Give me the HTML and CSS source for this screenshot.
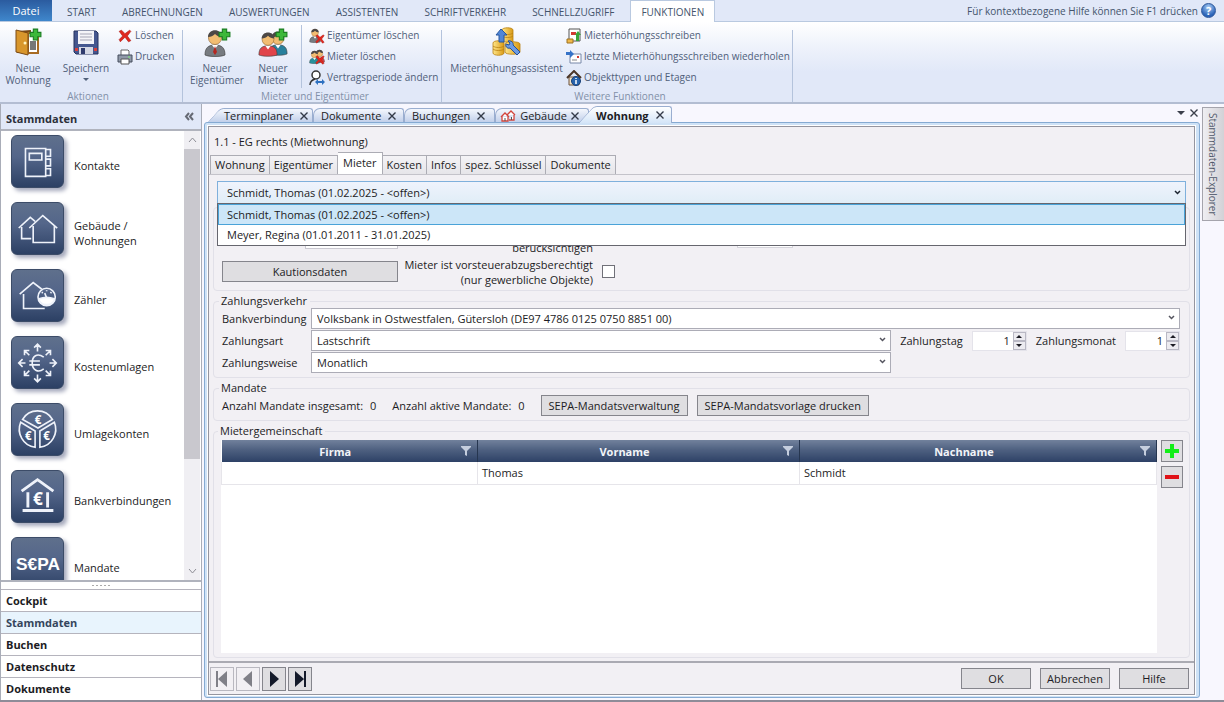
FILE: index.html
```html
<!DOCTYPE html>
<html lang="de">
<head>
    <meta charset="UTF-8">
    <meta name="viewport" content="width=device-width, initial-scale=1.0">
    <title>Hausverwaltung - Wohnung</title>
    <link rel="stylesheet" href="styles.css">
</head>
<body>

<svg class="defs" aria-hidden="true">
    <defs>
        <linearGradient id="gold" x1="0" x2="1"><stop offset="0" stop-color="#ffe68a"/><stop offset="1" stop-color="#d99a14"/></linearGradient>
        <symbol id="plus" viewBox="0 0 12 12"><path d="M4 1h4v3h3v4H8v3H4V8H1V4h3z" fill="#3db83a" stroke="#1b7d22"/></symbol>
        <symbol id="cross" viewBox="0 0 12 12"><path d="M1 2l2-1 3 3 4-3 1 1-3 4 3 4-2 1-3-4-4 4-1-2 3-3z" fill="#e0281e" stroke="#a81510" stroke-width=".5"/></symbol>
        <symbol id="person" viewBox="0 0 22 28">
            <path d="M1 26c0-7 3-10 10-10s10 3 10 10c-4 2-16 2-20 0z" fill="currentColor" stroke="#444" stroke-width=".7"/>
            <path d="M8 16l3 4 3-4z" fill="#fff"/>
            <circle cx="11" cy="9" r="6.500" fill="#f2bd72" stroke="#8a5a24" stroke-width=".6"/>
            <path d="M4 8c0-9 14-9 14 0-3 0-5-1-7-3-2 2-4 3-7 3z" fill="#4c4846"/>
        </symbol>
        <symbol id="filter" viewBox="0 0 10 10"><path d="M0 0h10v1L6 5v5L4 9V5L0 1z" fill="#c5cede"/></symbol>
        <symbol id="chevron" viewBox="0 0 7 5"><path d="M1 1l2.500 2.500L6 1" fill="none" stroke="currentColor" stroke-width="1.500"/></symbol>
        <symbol id="close" viewBox="0 0 8 8"><path d="M.5.5l7 7M7.500.5l-7 7" stroke="currentColor" stroke-width="1.400"/></symbol>
    </defs>
</svg>

<div class="app">
    <nav class="ribbon-tabs">
        <button class="ribbon-file">Datei</button>
        <button class="ribbon-tab">START</button>
        <button class="ribbon-tab">ABRECHNUNGEN</button>
        <button class="ribbon-tab">AUSWERTUNGEN</button>
        <button class="ribbon-tab">ASSISTENTEN</button>
        <button class="ribbon-tab">SCHRIFTVERKEHR</button>
        <button class="ribbon-tab">SCHNELLZUGRIFF</button>
        <button class="ribbon-tab active">FUNKTIONEN</button>
        <span class="help-hint">Für kontextbezogene Hilfe können Sie F1 drücken</span>
        <button class="help-button" aria-label="Hilfe">?</button>
    </nav>

    <div class="ribbon">
        <section class="ribbon-group group-actions">
            <div class="ribbon-items">
                <button class="big-button">
                    <svg width="28" height="28" viewBox="0 0 28 28">
                        <path d="M3 3l14-1v23H3z" fill="#7b4a16"/>
                        <path d="M14 5h10v20H14z" fill="#fff" stroke="#a86b22" stroke-width="2"/>
                        <path d="M16 13h6v9h-6z" fill="#777"/>
                        <path d="M2 2l12 3v22L2 24z" fill="#d8962c" stroke="#7b4a16"/>
                        <circle cx="11" cy="15" r="1.500" fill="#fff3c0"/>
                        <use href="#plus" x="15" y="0" width="13" height="13"/>
                    </svg>
                    <span>Neue<br>Wohnung</span>
                </button>
                <button class="big-button save">
                    <svg width="28" height="28" viewBox="0 0 28 28">
                        <path d="M2 3h22l2 2v21H4l-2-2z" fill="#45578f" stroke="#26325f"/>
                        <path d="M6 3h16v13H6z" fill="#f4f4f8"/>
                        <path d="M8 6h12M8 9h12M8 12h12" stroke="#a5a5b5"/>
                        <path d="M7 19h14v7H7z" fill="#d5d8e4"/>
                        <path d="M9 20h4v6H9z" fill="#303b6d"/>
                        <path d="M3 20h3v3H3zM22 20h3v3h-3z" fill="#d8403c"/>
                    </svg>
                    <span>Speichern</span>
                    <i class="drop-arrow"></i>
                </button>
                <div class="small-buttons">
                    <button class="small-button"><svg width="16" height="14"><use href="#cross"/></svg>Löschen</button>
                    <button class="small-button">
                        <svg width="16" height="16" viewBox="0 0 16 16"><path d="M4 1h7l1 1v5H4z" fill="#fff" stroke="#666"/><path d="M1 6h14v7H1z" fill="#9099a8" stroke="#444c5c"/><path d="M4 10h8v5H4z" fill="#fff" stroke="#555"/><path d="M11 8h2" stroke="#7bf06a"/></svg>Drucken
                    </button>
                </div>
            </div>
            <h2>Aktionen</h2>
        </section>

        <section class="ribbon-group group-tenants">
            <div class="ribbon-items">
                <button class="big-button">
                    <svg width="28" height="28" viewBox="0 0 28 28" color="#777b80">
                        <use href="#person" x="1" y="1" width="22" height="28"/>
                        <path d="M12 18l2 6-2 3-2-3z" fill="#b52620"/>
                        <use href="#plus" x="15" y="0" width="13" height="13"/>
                    </svg>
                    <span>Neuer<br>Eigentümer</span>
                </button>
                <button class="big-button">
                    <svg width="30" height="28" viewBox="0 0 30 28">
                        <use href="#person" x="10" y="2" width="20" height="26" color="#28809c"/>
                        <use href="#person" x="0" y="3" width="20" height="26" color="#e0444a"/>
                        <use href="#plus" x="17" y="0" width="13" height="13"/>
                    </svg>
                    <span>Neuer<br>Mieter</span>
                </button>
                <div class="small-buttons divided">
                    <button class="small-button">
                        <svg width="16" height="16" viewBox="0 0 16 16"><use href="#person" width="12" height="15" color="#777b80"/><use href="#cross" x="6" y="6" width="10" height="10"/></svg>Eigentümer löschen
                    </button>
                    <button class="small-button">
                        <svg width="16" height="16" viewBox="0 0 16 16"><use href="#person" x="5" width="11" height="14" color="#d0444a"/><use href="#person" y="1" width="11" height="14" color="#28909c"/><use href="#cross" x="6" y="6" width="10" height="10"/></svg>Mieter löschen
                    </button>
                    <button class="small-button">
                        <svg width="16" height="16" viewBox="0 0 16 16"><circle cx="7" cy="5" r="4" fill="#fff" stroke="#333" stroke-width="1.500"/><path d="M1 15c0-4 2-5 5-6" fill="none" stroke="#333" stroke-width="1.500"/><path d="M6 12l3-3v2h4V9l3 3-3 3v-2H9v2z" fill="#2d70c0"/></svg>Vertragsperiode ändern
                    </button>
                </div>
            </div>
            <h2>Mieter und Eigentümer</h2>
        </section>

        <section class="ribbon-group group-more">
            <div class="ribbon-items">
                <button class="big-button wide">
                    <svg width="30" height="30" viewBox="0 0 30 30">
                        <g fill="url(#gold)" stroke="#b98213" stroke-width=".8">
                            <path d="M10 3c0-3 11-3 11 0v12H10z"/><path d="M1 16c0-3 11-3 11 0v10c0 3-11 3-11 0z"/><path d="M13 17c0-3 15-3 15 0v8c0 3-15 3-15 0z"/>
                            <path d="M10 6c2 2 9 2 11 0M10 9c2 2 9 2 11 0M1 19c2 2 9 2 11 0M1 22c2 2 9 2 11 0" fill="none"/>
                        </g>
                        <path d="M9 2l6 6h-3v7H7V8H4z" fill="#4f86d6" stroke="#2857a0"/>
                        <path d="M16 14c3-1 6 2 5 4l7 7-3 3-7-7c-3 1-5-2-4-4l3 1 1-2z" fill="#6b9be3" stroke="#264f96"/>
                    </svg>
                    <span>Mieterhöhungsassistent</span>
                </button>
                <div class="small-buttons">
                    <button class="small-button">
                        <svg width="16" height="16" viewBox="0 0 16 16"><path d="M3 1h11v12H3z" fill="#fff" stroke="#555"/><path d="M5 4h5v3H5z" fill="#d23a32"/><path d="M1 11h6v4H1z" fill="#f0b94a" stroke="#9c7020"/><path d="M12 3l3 4h-2v6h-3V7H9z" fill="#38a53a"/></svg>Mieterhöhungsschreiben
                    </button>
                    <button class="small-button">
                        <svg width="16" height="16" viewBox="0 0 16 16"><path d="M4 5h11v9H4z" fill="#fff" stroke="#7787a8"/><path d="M11 7h2v2h-2z" fill="#d23a32"/><path d="M6 11h5" stroke="#888"/><path d="M0 3h4V1l4 4-4 4V6H0z" fill="#3673c8"/></svg>letzte Mieterhöhungsschreiben wiederholen
                    </button>
                    <button class="small-button">
                        <svg width="16" height="16" viewBox="0 0 16 16"><path d="M3 7h10v8H3z" fill="#f4e3c6" stroke="#6b513a"/><path d="M1 8l7-7 7 7" fill="none" stroke="#4a3528" stroke-width="2"/><circle cx="10" cy="11" r="4.500" fill="#2763ad" stroke="#173f78"/><path d="M10 8v1M10 10v4" stroke="#fff" stroke-width="1.500"/></svg>Objekttypen und Etagen
                    </button>
                </div>
            </div>
            <h2>Weitere Funktionen</h2>
        </section>
    </div>

    <div class="workspace">
        <aside class="sidebar">
            <header class="sidebar-header">
                <h2>Stammdaten</h2>
                <button aria-label="Einklappen"><svg width="11" height="9" viewBox="0 0 11 9"><path d="M5 1L2 4.500 5 8M9 1L6 4.500 9 8" fill="none" stroke="currentColor" stroke-width="2"/></svg></button>
            </header>
            <div class="sidebar-body">
                <ul class="module-list">
                    <li><a href="#">
                        <svg class="tile" viewBox="0 0 53 53"><path d="M14 13h21v29H14zM18 18h13v7H18zM35 14h5v7h-5M35 24h5v7h-5M35 34h5v7h-5"/></svg>
                        <span>Kontakte</span></a></li>
                    <li><a href="#">
                        <svg class="tile" viewBox="0 0 53 53"><path d="M7 26l12-11 5 4M10 25v12h10M18 26l14-13 15 13M22 24v17h22V24"/></svg>
                        <span>Gebäude /<br>Wohnungen</span></a></li>
                    <li><a href="#">
                        <svg class="tile" viewBox="0 0 53 53"><path d="M8 25l14-12 9 7M12 25v15h22"/><circle cx="36" cy="28" r="9"/><path d="M28 30c5-2 11-2 16 0-1 8-15 8-16 0z" fill="#fff"/><path d="M36 29l-2-5M31 23l1 1M36 21v1M41 23l-1 1"/></svg>
                        <span>Zähler</span></a></li>
                    <li><a href="#">
                        <svg class="tile" viewBox="0 0 53 53"><path d="M33 21c-7-5-12-1-12 6s6 11 12 6M18 25h11M18 29h11"/><path d="M26.500 15V8M23 11l3.500-3.500L30 11M26.500 39v7M23 43l3.500 3.500L30 43M14 27H7M11 23l-4 4 4 4M39 27h7M42 23l4 4-4 4M18 19l-5-5M13 19v-5h5M35 19l5-5M35 14h5v5M18 35l-5 5M13 35v5h5M35 35l5 5M35 40h5v-5"/></svg>
                        <span>Kostenumlagen</span></a></li>
                    <li><a href="#">
                        <svg class="tile" viewBox="0 0 53 53"><path d="M11 16a18 18 0 0 1 31 0l-15 9zM9 19a19 19 0 0 0 15 26V28zM44 19a19 19 0 0 1-15 26V28z"/><text x="27" y="21" class="tile-euro">€</text><text x="17" y="37" class="tile-euro">€</text><text x="36" y="37" class="tile-euro">€</text></svg>
                        <span>Umlagekonten</span></a></li>
                    <li><a href="#">
                        <svg class="tile bold" viewBox="0 0 53 53"><path d="M10 21L26.500 9 43 21M16.500 22v16M37 22v16M11 41h32"/><text x="27" y="35" class="tile-euro large">€</text></svg>
                        <span>Bankverbindungen</span></a></li>
                    <li><a href="#">
                        <svg class="tile" viewBox="0 0 53 53"><text x="27" y="33" class="tile-sepa">S€PA</text></svg>
                        <span>Mandate</span></a></li>
                </ul>
                <div class="scrollbar">
                    <svg width="9" height="6" viewBox="0 0 9 6"><path d="M1 5l3.500-4L8 5"/></svg>
                    <div class="scroll-track"><div class="scroll-thumb"></div></div>
                    <svg width="9" height="6" viewBox="0 0 9 6"><path d="M1 1l3.500 4L8 1"/></svg>
                </div>
            </div>
            <div class="splitter"><i></i><i></i><i></i><i></i><i></i></div>
            <nav class="sidebar-nav">
                <a href="#">Cockpit</a>
                <a href="#" class="active">Stammdaten</a>
                <a href="#">Buchen</a>
                <a href="#">Datenschutz</a>
                <a href="#">Dokumente</a>
            </nav>
        </aside>

        <main class="documents">
            <div class="doc-tabs">
                <div class="doc-tab slanted"><button>Terminplaner</button><button class="close" aria-label="Schließen"><svg width="8" height="8"><use href="#close"/></svg></button></div>
                <div class="doc-tab"><button>Dokumente</button><button class="close" aria-label="Schließen"><svg width="8" height="8"><use href="#close"/></svg></button></div>
                <div class="doc-tab"><button>Buchungen</button><button class="close" aria-label="Schließen"><svg width="8" height="8"><use href="#close"/></svg></button></div>
                <div class="doc-tab with-icon">
                    <svg width="16" height="12" viewBox="0 0 16 12"><path d="M1 7l4-4 4 4M2 6v5h6V6M7 5l4-4 4 4M9 10h5V5" fill="#fff" stroke="#d2453c" stroke-width="1.300"/><path d="M5 11V8M11.500 10V7" stroke="#555"/></svg>
                    <button>Gebäude</button><button class="close" aria-label="Schließen"><svg width="8" height="8"><use href="#close"/></svg></button>
                </div>
                <div class="doc-tab slanted active"><button>Wohnung</button><button class="close" aria-label="Schließen"><svg width="8" height="8"><use href="#close"/></svg></button></div>
                <div class="doc-tools">
                    <button aria-label="Fensterliste"><i class="drop-arrow"></i></button>
                    <button aria-label="Schließen"><svg width="8" height="8"><use href="#close"/></svg></button>
                </div>
            </div>

            <div class="doc-frame">
                <form class="editor">
                    <h1>1.1 - EG rechts (Mietwohnung)</h1>
                    <div class="page-tabs">
                        <button type="button">Wohnung</button>
                        <button type="button">Eigentümer</button>
                        <button type="button" class="active">Mieter</button>
                        <button type="button">Kosten</button>
                        <button type="button">Infos</button>
                        <button type="button">spez. Schlüssel</button>
                        <button type="button">Dokumente</button>
                    </div>

                    <div class="page">
                        <div class="tenant-combo">
                            <select aria-label="Mieter">
                                <option>Schmidt, Thomas (01.02.2025 - &lt;offen&gt;)</option>
                                <option>Meyer, Regina (01.01.2011 - 31.01.2025)</option>
                            </select>
                            <svg class="chevron" width="7" height="5"><use href="#chevron"/></svg>
                            <ul class="combo-list" role="listbox">
                                <li role="option" aria-selected="true">Schmidt, Thomas (01.02.2025 - &lt;offen&gt;)</li>
                                <li role="option">Meyer, Regina (01.01.2011 - 31.01.2025)</li>
                            </ul>
                        </div>

                        <fieldset class="contract">
                            <input type="text" class="deposit" aria-label="Kaution">
                            <label class="right-label" for="consider">berücksichtigen</label>
                            <input type="text" id="consider" class="persons">
                            <button type="button" class="button">Kautionsdaten</button>
                            <label class="right-label" for="vat">Mieter ist vorsteuerabzugsberechtigt<br>(nur gewerbliche Objekte)</label>
                            <input type="checkbox" id="vat">
                        </fieldset>

                        <fieldset>
                            <legend>Zahlungsverkehr</legend>
                            <div class="payment">
                                <label for="bank">Bankverbindung</label>
                                <div class="select full">
                                    <select id="bank"><option>Volksbank in Ostwestfalen, Gütersloh (DE97 4786 0125 0750 8851 00)</option></select>
                                    <svg class="chevron" width="7" height="5"><use href="#chevron"/></svg>
                                </div>
                                <label for="kind">Zahlungsart</label>
                                <div class="select">
                                    <select id="kind"><option>Lastschrift</option></select>
                                    <svg class="chevron" width="7" height="5"><use href="#chevron"/></svg>
                                </div>
                                <label for="day">Zahlungstag</label>
                                <div class="spinner">
                                    <input type="text" id="day" value="1">
                                    <button type="button" aria-label="Mehr"><i class="drop-arrow up"></i></button>
                                    <button type="button" aria-label="Weniger"><i class="drop-arrow"></i></button>
                                </div>
                                <label for="month">Zahlungsmonat</label>
                                <div class="spinner">
                                    <input type="text" id="month" value="1">
                                    <button type="button" aria-label="Mehr"><i class="drop-arrow up"></i></button>
                                    <button type="button" aria-label="Weniger"><i class="drop-arrow"></i></button>
                                </div>
                                <label for="interval">Zahlungsweise</label>
                                <div class="select">
                                    <select id="interval"><option>Monatlich</option></select>
                                    <svg class="chevron" width="7" height="5"><use href="#chevron"/></svg>
                                </div>
                            </div>
                        </fieldset>

                        <fieldset>
                            <legend>Mandate</legend>
                            <div class="mandates">
                                <span class="count">Anzahl Mandate insgesamt: <b>0</b></span>
                                <span class="count">Anzahl aktive Mandate: <b>0</b></span>
                                <button type="button" class="button">SEPA-Mandatsverwaltung</button>
                                <button type="button" class="button">SEPA-Mandatsvorlage drucken</button>
                            </div>
                        </fieldset>

                        <fieldset class="community">
                            <legend>Mietergemeinschaft</legend>
                            <div class="community-body">
                                <div class="grid-area">
                                    <table>
                                        <colgroup><col class="col-company"><col class="col-first"><col></colgroup>
                                        <thead>
                                            <tr>
                                                <th>Firma<svg width="10" height="10"><use href="#filter"/></svg></th>
                                                <th>Vorname<svg width="10" height="10"><use href="#filter"/></svg></th>
                                                <th>Nachname<svg width="10" height="10"><use href="#filter"/></svg></th>
                                            </tr>
                                        </thead>
                                        <tbody>
                                            <tr><td></td><td>Thomas</td><td>Schmidt</td></tr>
                                        </tbody>
                                    </table>
                                </div>
                                <div class="row-buttons">
                                    <button type="button" class="button" aria-label="Hinzufügen"><svg width="14" height="14" viewBox="0 0 14 14"><path d="M7 0v14M0 7h14" stroke="#12ee18" stroke-width="4"/></svg></button>
                                    <button type="button" class="button" aria-label="Entfernen"><svg width="14" height="14" viewBox="0 0 14 14"><path d="M0 7h14" stroke="#e01218" stroke-width="4"/></svg></button>
                                </div>
                            </div>
                        </fieldset>
                    </div>

                    <footer class="editor-footer">
                        <button type="button" class="record" disabled aria-label="Erster"><svg width="12" height="16" viewBox="0 0 12 16"><path d="M0 0h2v16H0zM11 0v16L2 8z"/></svg></button>
                        <button type="button" class="record" disabled aria-label="Voriger"><svg width="12" height="16" viewBox="0 0 12 16"><path d="M10 0v16L1 8z"/></svg></button>
                        <button type="button" class="record" aria-label="Nächster"><svg width="12" height="16" viewBox="0 0 12 16"><path d="M2 0v16l9-8z"/></svg></button>
                        <button type="button" class="record" aria-label="Letzter"><svg width="12" height="16" viewBox="0 0 12 16"><path d="M10 0h2v16h-2zM1 0v16l9-8z"/></svg></button>
                        <div class="dialog-buttons">
                            <button type="button" class="button">OK</button>
                            <button type="button" class="button">Abbrechen</button>
                            <button type="button" class="button">Hilfe</button>
                        </div>
                    </footer>
                </form>
            </div>
        </main>

        <aside class="dock-right">
            <button>Stammdaten-Explorer</button>
        </aside>
    </div>
</div>

</body>
</html>
```
FILE: styles.css
```css
* {
    box-sizing: border-box;
}
body {
    margin: 0;
    font-family: 'Segoe UI', 'Open Sans', 'Noto Sans', sans-serif;
    font-size: 11px;
    line-height: 15px;
    color: #1c1c24;
    background: #f8f7fe;
}
button, input, select {
    font: inherit;
    color: inherit;
    margin: 0;
}
button {
    padding: 0;
    border: 0;
    background: none;
    white-space: nowrap;
}
h1, h2, ul {
    margin: 0;
    padding: 0;
    font-size: inherit;
    font-weight: normal;
    list-style: none;
}
a {
    color: inherit;
    text-decoration: none;
}
svg {
    display: block;
    flex: none;
}
.defs {
    position: absolute;
    width: 0;
    height: 0;
}
.app {
    display: flex;
    flex-direction: column;
    height: 100vh;
    border-bottom: 2px solid #8e8c98;
}
.drop-arrow {
    width: 0;
    border: 3px solid transparent;
    border-top-color: currentColor;
    border-bottom: 0;
}
.drop-arrow.up {
    border-top: 0;
    border-bottom: 3px solid currentColor;
}

/* ribbon */
.ribbon-tabs {
    display: flex;
    align-items: flex-end;
    height: 22px;
    flex: none;
    background: #e1e8f8;
    border-bottom: 1px solid #b9c9e0;
    color: #44546c;
}
.ribbon-file {
    width: 52px;
    height: 21px;
    margin-right: 2px;
    color: #fff;
    background: linear-gradient(#2b5b9f, #3f87cc);
}
.ribbon-tab {
    height: 20px;
    padding: 2px 13px 0;
    font-size: 10px;
}
.ribbon-tab.active {
    height: 22px;
    margin: 0 3px -1px;
    padding: 1px 10px 0;
    background: #fff;
    border: 1px solid #b9c9e0;
    border-bottom: 0;
}
.help-hint, .ribbon, .dock-right {
    font-size: 10px;
}
.help-hint {
    margin-left: auto;
    padding-bottom: 2px;
}
.help-button {
    width: 15px;
    height: 15px;
    margin: 0 8px 3px 3px;
    border-radius: 50%;
    border: 1px solid #2c569a;
    background: radial-gradient(circle at 50% 25%, #a7ccf5, #2b63b8 70%);
    color: #fff;
    font-weight: bold;
    line-height: 12px;
}
.ribbon {
    display: flex;
    flex: none;
    height: 82px;
    padding-top: 4px;
    background: linear-gradient(#fff, #eef2fb 25px, #e1e8f8 50px, #e1e8f8);
    border-bottom: 2px solid #b3bdd2;
    color: #50607a;
}
.ribbon-group {
    display: flex;
    flex-direction: column;
    justify-content: space-between;
    margin-top: 4px;
    border-right: 1px solid #b4c3dc;
}
.group-actions {
    width: 183px;
    padding-right: 6px;
}
.group-tenants {
    width: 259px;
    padding-left: 6px;
}
.group-more {
    width: 351px;
    padding-left: 6px;
}
.ribbon-group h2 {
    text-align: center;
    line-height: 12px;
    color: #8290a8;
}
.ribbon-items {
    display: flex;
    height: 58px;
}
.big-button {
    display: flex;
    flex-direction: column;
    align-items: center;
    width: 56px;
    height: 56px;
    line-height: 12px;
    white-space: normal;
}
.big-button svg {
    height: 30px;
    margin: -3px 0 5px;
}
.big-button.wide {
    width: 117px;
}
.big-button.save {
    width: 60px;
}
.big-button .drop-arrow {
    margin-top: 4px;
}
.small-buttons {
    display: flex;
    flex-direction: column;
    margin-left: 1px;
    margin-top: -5px;
}
.small-button {
    display: flex;
    align-items: center;
    gap: 2px;
    height: 21px;
}
.small-buttons.divided {
    margin-left: 0;
    padding-left: 7px;
    border-left: 1px solid #b4c3dc;
}

/* workspace */
.workspace {
    display: flex;
    flex: 1;
    min-height: 0;
}
.sidebar {
    display: flex;
    flex-direction: column;
    width: 202px;
    flex: none;
    padding-bottom: 1px;
    border: 1px solid #a9adb8;
    border-width: 0 1px;
    background: #fff;
}
.sidebar-header {
    display: flex;
    justify-content: space-between;
    align-items: center;
    height: 27px;
    flex: none;
    padding: 4px 6px 0 5px;
    background: #e1e8f8;
    border-bottom: 2px solid #b0b3bd;
    color: #2c303a;
}
.sidebar-header h2 {
    font-weight: bold;
}
.sidebar-header button {
    color: #666a74;
    padding-bottom: 4px;
}
.sidebar-body {
    display: flex;
    flex: 1;
    min-height: 0;
    border-bottom: 2px solid #b0b3bd;
}
.module-list {
    flex: 1;
    overflow: hidden;
    padding: 4px 0 0 10px;
}
.module-list a {
    display: flex;
    align-items: flex-start;
    gap: 10px;
    height: 67px;
}
.module-list span {
    display: flex;
    align-items: center;
    height: 61px;
}
.tile {
    width: 53px;
    height: 53px;
    border-radius: 6px;
    background: linear-gradient(#5f708c, #54668a 40%, #2c4064);
    border: 1px solid #3c4c68;
    box-shadow: 3px 3px 4px #a5a9bc;
    fill: none;
    stroke: #eef2fa;
    stroke-width: 1.7;
}
.tile.bold {
    stroke-width: 3;
}
.tile text {
    fill: #fff;
    stroke: none;
    text-anchor: middle;
    font-weight: bold;
}
.tile-euro {
    font-size: 12px;
}
.tile-euro.large {
    font-size: 18px;
}
.tile-sepa {
    font-family: 'Liberation Sans', sans-serif;
    font-size: 18px;
}
.scrollbar {
    display: flex;
    flex-direction: column;
    align-items: center;
    width: 16px;
    margin-right: 1px;
    padding: 6px 0;
    background: #f0eff3;
    fill: none;
    stroke: #8e8e96;
}
.scroll-track {
    flex: 1;
    width: 100%;
    margin: 6px 0;
}
.scroll-thumb {
    height: 75%;
    background: #c9c8ce;
}
.splitter {
    display: flex;
    justify-content: center;
    gap: 2px;
    height: 7px;
    padding-top: 3px;
}
.splitter i {
    width: 2px;
    height: 1px;
    background: #aaa;
}
.sidebar-nav a {
    display: block;
    height: 22px;
    padding: 3px 5px;
    border-top: 1px solid #b5b4bd;
    font-weight: bold;
}
.sidebar-nav a.active {
    background: #e8f4fd;
    color: #35455c;
}

/* document area */
.documents {
    display: flex;
    flex-direction: column;
    flex: 1;
    min-width: 0;
    padding: 2px 0 2px 2px;
}
.doc-tabs {
    display: flex;
    align-items: flex-end;
    height: 16px;
    flex: none;
    padding-left: 4px;
}
.doc-tab {
    position: relative;
    display: flex;
    align-items: center;
    justify-content: space-between;
    gap: 7px;
    height: 14px;
    width: 91px;
    padding: 0 9px 0 7px;
    border: 1px solid #9aaed0;
    border-bottom: 0;
    border-radius: 7px 3px 0 0;
    background: linear-gradient(#f4f7fd, #c2d0ea);
}
.doc-tab button {
    line-height: 13px;
    position: relative;
}
.doc-tab .close {
    color: #333a48;
}
.doc-tab.with-icon {
    width: 94px;
    gap: 3px;
    padding-left: 4px;
}
.doc-tab.slanted {
    margin-left: 14px;
    padding-left: 2px;
    border-left: 0;
}
.doc-tab.slanted::before {
    content: '';
    position: absolute;
    left: -8px;
    top: -1px;
    bottom: 0;
    width: 20px;
    border: 1px solid #9aaed0;
    border-width: 1px 0 0 1px;
    border-top-left-radius: 4px;
    background: linear-gradient(#f4f7fd, #c2d0ea);
    transform: skewX(-42deg);
}
.doc-tab.active {
    height: 17px;
    width: 78px;
    margin: 0 0 -1px 5px;
    padding: 0 7px 0 2px;
    background: linear-gradient(#fff, #d4e5f8);
    font-weight: bold;
}
.doc-tab.active::before {
    background: linear-gradient(#fff, #d4e5f8);
}
.doc-tools {
    display: flex;
    align-items: center;
    gap: 5px;
    height: 18px;
    margin-left: auto;
    padding-right: 2px;
    color: #3c404c;
}
.doc-tools .drop-arrow {
    display: block;
    border-width: 4px 4px 0;
}
.doc-frame {
    display: flex;
    flex: 1;
    min-height: 0;
    padding: 3px 4px 2px 3px;
    border: 1px solid #85aad2;
    border-radius: 3px;
    background: #cfe2f6;
}
.editor {
    display: flex;
    flex-direction: column;
    flex: 1;
    min-width: 0;
    border: 1px solid #95959f;
    outline: 1px solid #fff;
    background: #f2f0f4;
}
.editor h1 {
    padding: 7px 5px 0;
    height: 25px;
}
.page-tabs {
    display: flex;
    align-items: flex-end;
    flex: none;
    height: 22px;
    padding-left: 1px;
}
.page-tabs button {
    height: 19px;
    padding: 0 4px 1px;
    border: 1px solid #acacb4;
    border-bottom: 0;
    border-left-width: 0;
    background: linear-gradient(#f4f3f6, #e6e5e9);
}
.page-tabs button:first-child {
    border-left-width: 1px;
}
.page-tabs .active {
    height: 22px;
    padding: 0 5px 2px;
    background: #fff;
}
.page {
    display: flex;
    flex-direction: column;
    flex: 1;
    gap: 3px;
    min-height: 0;
    padding: 6px 4px 3px;
    border-top: 1px solid #c4c3ca;
    border-bottom: 2px solid #aaaab2;
}

/* fields */
select {
    display: block;
    width: 100%;
    height: 21px;
    padding: 0 5px;
    border: 1px solid #acacb6;
    border-radius: 0;
    background: #fff;
    appearance: none;
}
.chevron {
    position: absolute;
    top: 7px;
    right: 5px;
    color: #55555f;
}
.button {
    height: 21px;
    padding: 0 7px;
    border: 1px solid #85858c;
    background: #dfdee1;
}
.tenant-combo {
    position: relative;
    z-index: 2;
    margin: 0 4px;
}
.tenant-combo select {
    height: 23px;
    padding: 0 9px;
    border-color: #7fb0dc;
    background: linear-gradient(#eff3fc, #e0edf7);
}
.tenant-combo .chevron {
    top: 9px;
    color: #1c2430;
}
.combo-list {
    position: absolute;
    top: 22px;
    left: 0;
    right: 0;
    border: 1px solid #66666e;
    background: #fff;
}
.combo-list li {
    height: 20px;
    padding: 2px 9px;
}
.combo-list [aria-selected] {
    height: 21px;
    padding: 2px 8px;
    border: 1px solid #4aa3d8;
    background: #cce6f8;
}
fieldset {
    margin: 0;
    padding: 0 9px 4px 8px;
    border: 1px solid #e1e0e8;
    border-radius: 4px;
    min-width: 0;
}
legend {
    height: 14px;
    margin-left: -3px;
    padding: 0 3px 0 2px;
    line-height: 14px;
}
.contract {
    display: grid;
    grid-template-columns: 176px 186px auto;
    grid-template-rows: 27px 32px;
    column-gap: 9px;
    align-items: center;
    justify-content: start;
    height: 84px;
    padding-top: 20px;
}
.contract .deposit {
    width: 93px;
    height: 21px;
    align-self: start;
    justify-self: end;
    border: 1px solid #c9c8d0;
}
.contract .persons {
    align-self: start;
    width: 56px;
    height: 20px;
    margin-left: 135px;
    border: 1px solid #d5d4db;
}
.right-label {
    justify-self: end;
    align-self: end;
    text-align: right;
    white-space: nowrap;
}
.contract input[type=checkbox] {
    appearance: none;
    width: 13px;
    height: 13px;
    border: 1px solid #707078;
    background: #fff;
}
.payment {
    display: grid;
    grid-template-columns: 80px 1fr auto 55px auto 55px;
    column-gap: 9px;
    row-gap: 1px;
    align-items: center;
}
.select {
    position: relative;
    grid-column: 2;
}
.select.full {
    grid-column: 2 / -1;
}
.spinner {
    display: grid;
    grid-template-columns: 1fr 13px;
    grid-template-rows: 9px 9px;
    height: 20px;
    column-gap: 3px;
    border: 1px solid #e4e3ea;
    background: #fff;
}
.spinner input {
    grid-row: 1 / 3;
    width: 100%;
    height: 18px;
    padding: 0;
    border: 0;
    background: none;
    text-align: right;
}
.spinner button {
    display: flex;
    align-items: center;
    justify-content: center;
    border: 1px solid #b9b8c4;
    background: #ecebf0;
}
.mandates {
    display: flex;
    align-items: center;
    gap: 9px;
}
.count {
    margin-right: 7px;
}
.count b {
    margin-left: 4px;
    font-weight: normal;
}
.community {
    display: flex;
    flex-direction: column;
    flex: 1;
    min-height: 0;
    padding: 2px 6px 4px 7px;
}
.community-body {
    display: flex;
    gap: 4px;
    height: 100%;
}
.grid-area {
    flex: 1;
    background: #fff;
}
table {
    width: 100%;
    table-layout: fixed;
    border-collapse: collapse;
}
.col-company {
    width: 256px;
}
.col-first {
    width: 322px;
}
th {
    position: relative;
    height: 22px;
    padding: 0 28px 0 0;
    background: linear-gradient(#71819c, #4e6080 45%, #2d4166);
    border-right: 1px solid #263650;
    color: #f2f4f8;
}
th svg {
    position: absolute;
    top: 6px;
    right: 6px;
}
td {
    height: 22px;
    padding: 0 4px;
    border: 1px solid #e6e5ea;
    border-top: 0;
}
.row-buttons {
    display: flex;
    flex-direction: column;
    gap: 4px;
}
.row-buttons .button {
    display: flex;
    align-items: center;
    justify-content: center;
    width: 22px;
    height: 22px;
    padding: 0;
}
.editor-footer {
    display: flex;
    align-items: center;
    gap: 2px;
    flex: none;
    height: 31px;
    padding: 0 5px 0 1px;
}
.record {
    display: flex;
    align-items: center;
    justify-content: center;
    width: 24px;
    height: 24px;
    border: 1px solid #85858c;
    background: #dfdee1;
    fill: #141a2a;
}
.record:disabled {
    border-color: #b9b8c0;
    background: #f2f0f4;
    fill: #808088;
}
.dialog-buttons {
    display: flex;
    gap: 9px;
    margin-left: auto;
}
.dialog-buttons .button {
    width: 70px;
    padding: 0;
}
.dock-right {
    width: 22px;
    flex: none;
    margin-left: 2px;
    padding-top: 3px;
}
.dock-right button {
    width: 22px;
    height: 114px;
    padding-right: 3px;
    border: 1px solid #a5a4ac;
    border-right: 0;
    background: linear-gradient(90deg, #efeef2, #d2d1d6);
    color: #50586a;
    writing-mode: vertical-rl;
}
```
